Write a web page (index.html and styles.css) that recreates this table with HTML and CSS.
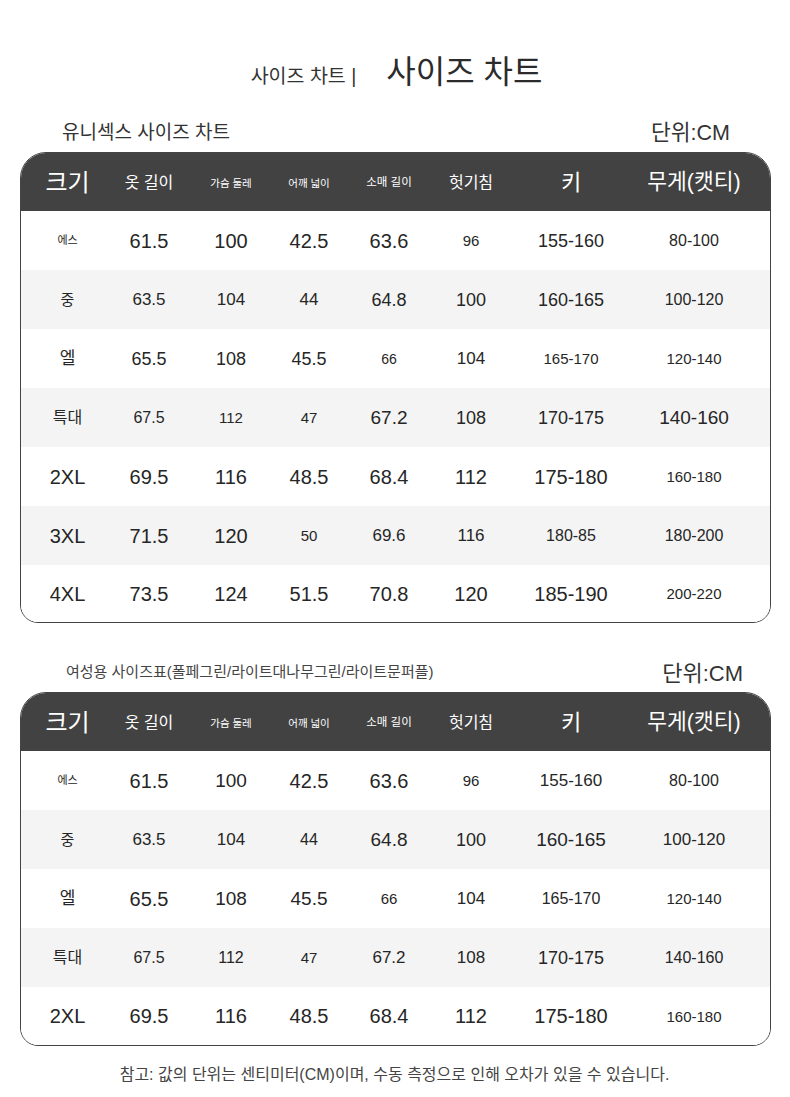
FILE: index.html
```html
<!DOCTYPE html>
<html lang="ko">
<head>
<meta charset="utf-8">
<title>사이즈 차트</title>
<link rel="stylesheet" href="styles.css">
</head>
<body>
<div class="page">
  <div class="title">
    <span class="title-small">사이즈 차트 |</span>
    <span class="title-big">사이즈 차트</span>
  </div>

  <div class="caption caption-1">
    <span class="cap-label">유니섹스 사이즈 차트</span>
    <span class="cap-unit">단위:CM</span>
  </div>

  <div class="chart">
    <div class="row head">
      <span class="h24">크기</span><span class="h16">옷 길이</span><span class="h10">가슴 둘레</span><span class="h10">어깨 넓이</span><span class="h11">소매 길이</span><span class="h16">헛기침</span><span class="h22">키</span><span class="h20">무게(캣티)</span>
    </div>
    <div class="row">
      <span class="k11">에스</span><span class="t20">61.5</span><span class="t20">100</span><span class="t20">42.5</span><span class="t20">63.6</span><span class="t15">96</span><span class="t18">155-160</span><span class="t16">80-100</span>
    </div>
    <div class="row alt">
      <span class="k15">중</span><span class="t17">63.5</span><span class="t17">104</span><span class="t17">44</span><span class="t18">64.8</span><span class="t18">100</span><span class="t18">160-165</span><span class="t16">100-120</span>
    </div>
    <div class="row">
      <span class="k17">엘</span><span class="t18">65.5</span><span class="t18">108</span><span class="t18">45.5</span><span class="t14">66</span><span class="t17">104</span><span class="t15">165-170</span><span class="t15">120-140</span>
    </div>
    <div class="row alt">
      <span class="k16">특대</span><span class="t16">67.5</span><span class="t15">112</span><span class="t15">47</span><span class="t19">67.2</span><span class="t18">108</span><span class="t18">170-175</span><span class="t19">140-160</span>
    </div>
    <div class="row">
      <span class="t20">2XL</span><span class="t20">69.5</span><span class="t20">116</span><span class="t20">48.5</span><span class="t20">68.4</span><span class="t20">112</span><span class="t20">175-180</span><span class="t15">160-180</span>
    </div>
    <div class="row alt">
      <span class="t20">3XL</span><span class="t20">71.5</span><span class="t20">120</span><span class="t15">50</span><span class="t17">69.6</span><span class="t17">116</span><span class="t16">180-85</span><span class="t16">180-200</span>
    </div>
    <div class="row last">
      <span class="t20">4XL</span><span class="t20">73.5</span><span class="t20">124</span><span class="t20">51.5</span><span class="t20">70.8</span><span class="t20">120</span><span class="t20">185-190</span><span class="t15">200-220</span>
    </div>
  </div>

  <div class="caption caption-2">
    <span class="cap-label small">여성용 사이즈표(폴페그린/라이트대나무그린/라이트문퍼플)</span>
    <span class="cap-unit large">단위:CM</span>
  </div>

  <div class="chart">
    <div class="row head">
      <span class="h24">크기</span><span class="h16">옷 길이</span><span class="h10">가슴 둘레</span><span class="h10">어깨 넓이</span><span class="h11">소매 길이</span><span class="h16">헛기침</span><span class="h22">키</span><span class="h20">무게(캣티)</span>
    </div>
    <div class="row">
      <span class="k11">에스</span><span class="t20">61.5</span><span class="t19">100</span><span class="t20">42.5</span><span class="t20">63.6</span><span class="t15">96</span><span class="t17">155-160</span><span class="t16">80-100</span>
    </div>
    <div class="row alt">
      <span class="k15">중</span><span class="t17">63.5</span><span class="t17">104</span><span class="t16">44</span><span class="t19">64.8</span><span class="t18">100</span><span class="t19">160-165</span><span class="t17">100-120</span>
    </div>
    <div class="row">
      <span class="k17">엘</span><span class="t20">65.5</span><span class="t19">108</span><span class="t19">45.5</span><span class="t15">66</span><span class="t17">104</span><span class="t16">165-170</span><span class="t15">120-140</span>
    </div>
    <div class="row alt">
      <span class="k16">특대</span><span class="t16">67.5</span><span class="t16">112</span><span class="t15">47</span><span class="t17">67.2</span><span class="t17">108</span><span class="t18">170-175</span><span class="t16">140-160</span>
    </div>
    <div class="row last2">
      <span class="t20">2XL</span><span class="t20">69.5</span><span class="t20">116</span><span class="t20">48.5</span><span class="t20">68.4</span><span class="t20">112</span><span class="t20">175-180</span><span class="t15">160-180</span>
    </div>
  </div>

  <div class="note">참고: 값의 단위는 센티미터(CM)이며, 수동 측정으로 인해 오차가 있을 수 있습니다.</div>
</div>
</body>
</html>
```

FILE: styles.css
```css
* { box-sizing: border-box; }
html, body { margin: 0; padding: 0; background: #ffffff; }
body {
  font-family: "Liberation Sans", "Noto Sans CJK KR", sans-serif;
  color: #262626;
}
.page {
  width: 790px;
  padding: 30px 19px 0 20px;
}
.title {
  height: 80px;
  display: flex;
  justify-content: center;
  align-items: baseline;
  gap: 30px;
  padding-top: 16px;
  padding-left: 2px;
}
.title-small {
  font-size: 19.5px;
  color: #333;
}
.title-big {
  font-size: 32px;
  color: #2b2b2b;
}
.caption {
  display: flex;
  justify-content: space-between;
  align-items: center;
}
.caption-1 {
  height: 42px;
  padding: 0 41px 2px 42px;
}
.caption-2 {
  height: 69px;
  padding: 26px 28px 0 46px;
}
.cap-label {
  font-size: 19px;
  color: #333;
}
.cap-label.small {
  font-size: 15px;
  color: #444;
}
.cap-unit {
  font-size: 21.5px;
  color: #333;
}
.cap-unit.large {
  font-size: 22px;
}
.chart {
  border: 1px solid #444;
  border-radius: 26px 26px 18px 18px;
  overflow: hidden;
}
.row {
  display: grid;
  grid-template-columns: 93px 70px 94px 62px 98px 66px 134px 112px;
  height: 59px;
  align-items: center;
  background: #ffffff;
}
.row > span {
  text-align: center;
  white-space: nowrap;
  line-height: 1;
}
.row.alt { background: #f4f4f4; }
.row.last { height: 57px; }
.row.last2 { height: 58px; }
.row.head {
  height: 58px;
  background: #424242;
  color: #ffffff;
}
.row.head > span { padding-top: 2px; }
.h24 { font-size: 24px; }
.h22 { font-size: 22px; }
.h20 { font-size: 21.5px; }
.h16 { font-size: 16px; }
.h11 { font-size: 11.5px; }
.h10 { font-size: 10.5px; }
.k11 { font-size: 11px; }
.k15 { font-size: 15px; }
.k16 { font-size: 16px; }
.k17 { font-size: 17px; }
.t14 { font-size: 14px; }
.t15 { font-size: 15px; }
.t16 { font-size: 16px; }
.t17 { font-size: 17px; }
.t18 { font-size: 18px; }
.t19 { font-size: 19px; }
.t20 { font-size: 20px; }
.note {
  height: 54px;
  display: flex;
  align-items: center;
  justify-content: center;
  font-size: 16px;
  color: #444;
  padding-right: 2px;
}
```
